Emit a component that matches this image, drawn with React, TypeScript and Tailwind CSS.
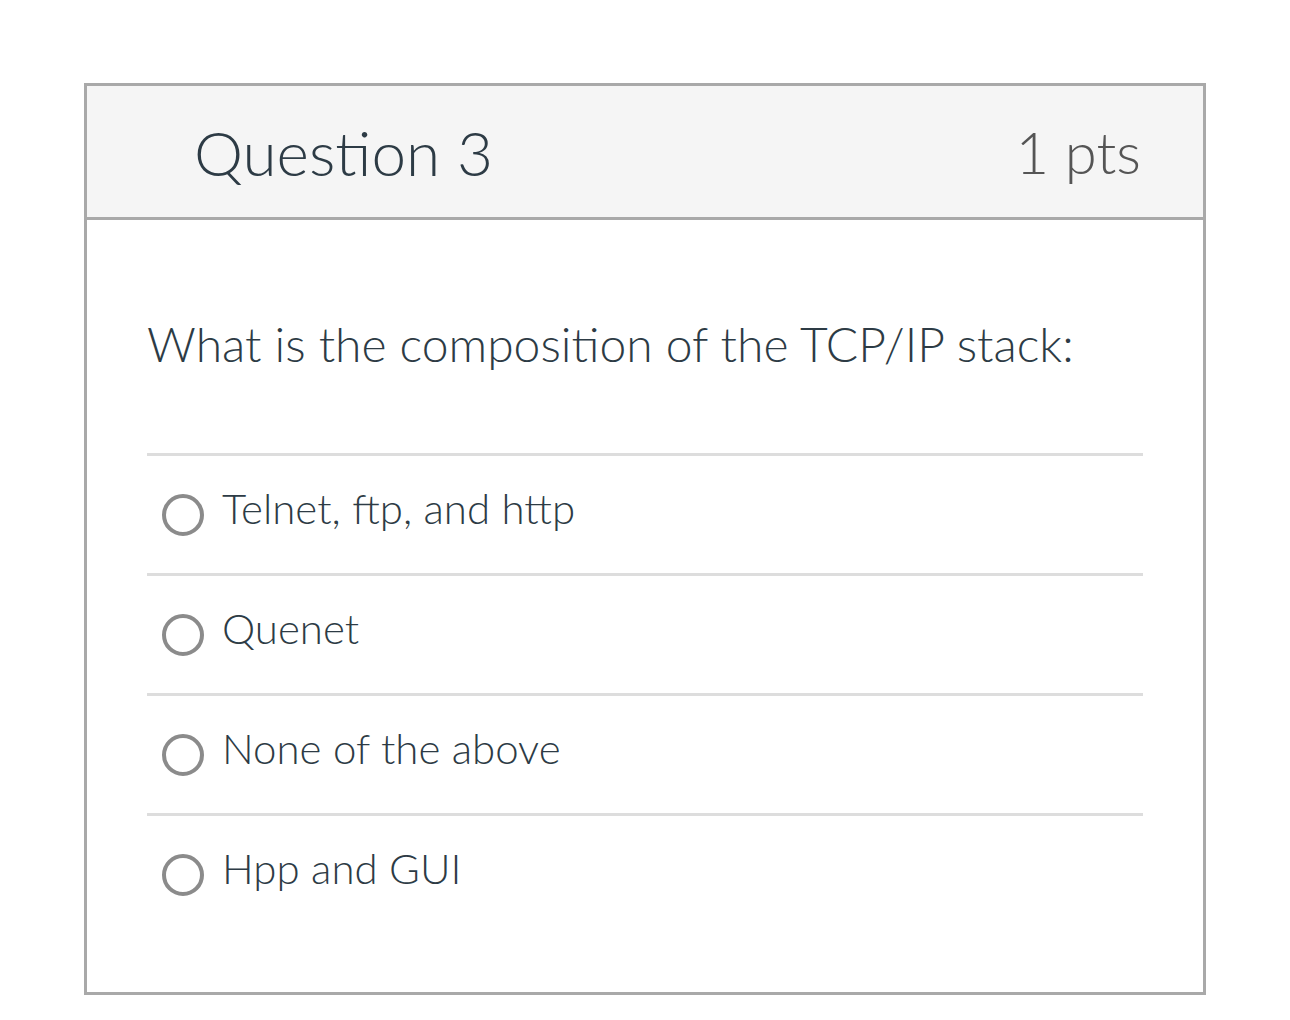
const answers = ['Telnet, ftp, and http', 'Quenet', 'None of the above', 'Hpp and GUI']

function Radio() {
  return <span className="block w-[42px] h-[42px] rounded-full border-[4px] border-[#8b8b8b] bg-white shrink-0" />
}

export default function App() {
  return (
    <div className="w-[1290px] h-[1020px] bg-white pt-[83px] pl-[84px] font-['Lato',sans-serif]">
      <div className="w-[1122px] h-[912px] border-[3px] border-[#a9a9a9] flex flex-col">
        {/* Header */}
        <div className="h-[134px] bg-[#f5f5f5] border-b-[3px] border-[#a9a9a9] flex items-center justify-between pl-[107px] pr-[62px]">
          <h2 className="text-[62px] font-light text-[#2d3b45] leading-none">Question 3</h2>
          <span className="text-[58px] font-light text-[#555555] leading-none">1 pts</span>
        </div>

        {/* Body */}
        <div className="px-[60px]">
          <div className="h-[233px] flex items-center">
            <p className="text-[48px] font-light text-[#2d3b45] leading-none mt-[14px]">What is the composition of the TCP/IP stack:</p>
          </div>
          <div className="flex flex-col">
            {answers.map(a => (
              <label key={a} className="h-[120px] border-t-[3px] border-[#dddddd] flex items-center gap-[18px] pl-[15px]">
                <Radio />
                <span className="text-[42px] font-light text-[#2d3b45] leading-none -mt-[14px]">{a}</span>
              </label>
            ))}
          </div>
        </div>
      </div>
    </div>
  )
}
